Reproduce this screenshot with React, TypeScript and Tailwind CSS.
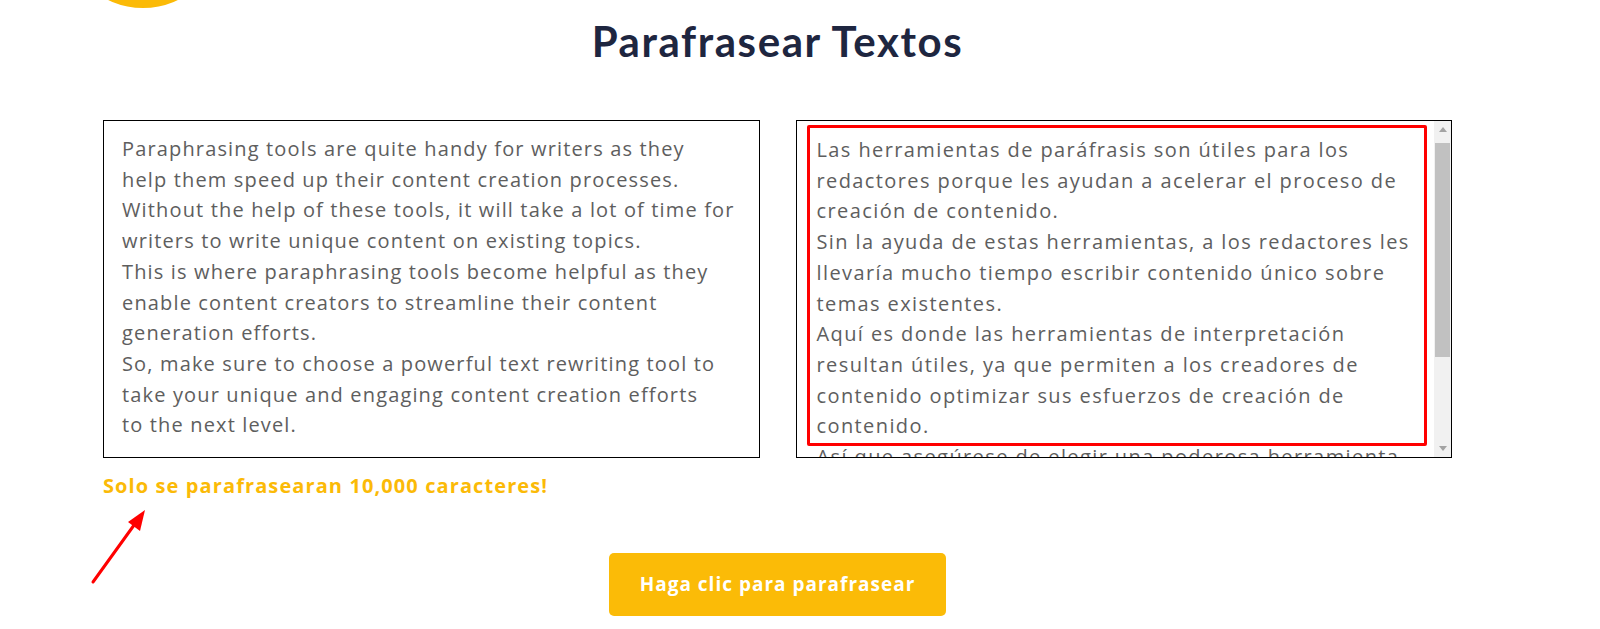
import React from "react";

const leftLines = [
  "Paraphrasing tools are quite handy for writers as they",
  "help them speed up their content creation processes.",
  "Without the help of these tools, it will take a lot of time for",
  "writers to write unique content on existing topics.",
  "This is where paraphrasing tools become helpful as they",
  "enable content creators to streamline their content",
  "generation efforts.",
  "So, make sure to choose a powerful text rewriting tool to",
  "take your unique and engaging content creation efforts",
  "to the next level.",
];

const rightLines = [
  "Las herramientas de paráfrasis son útiles para los",
  "redactores porque les ayudan a acelerar el proceso de",
  "creación de contenido.",
  "Sin la ayuda de estas herramientas, a los redactores les",
  "llevaría mucho tiempo escribir contenido único sobre",
  "temas existentes.",
  "Aquí es donde las herramientas de interpretación",
  "resultan útiles, ya que permiten a los creadores de",
  "contenido optimizar sus esfuerzos de creación de",
  "contenido.",
  "Así que asegúrese de elegir una poderosa herramienta",
];

const bodyFont = { fontFamily: '"Open Sans", "Noto Sans", sans-serif' };

export default function App() {
  return (
    <div className="relative w-full h-[629px] overflow-hidden bg-white">
      {/* yellow circle logo fragment */}
      <div className="absolute left-[63px] top-[-152px] w-[160px] h-[160px] rounded-full bg-[#fbba07]" />

      <div className="ml-[103px] w-[1349px] flex flex-col">
        <h1
          className="mt-[16px] h-[50px] text-center text-[42px] leading-[50px] font-bold text-[#1e2640] tracking-[1.6px]"
          style={{ fontFamily: 'Lato, "Open Sans", sans-serif' }}
        >
          Parafrasear Textos
        </h1>

        <div className="mt-[54px] grid grid-cols-2 gap-[36px]">
          <div
            className="h-[338px] border border-black pl-[18px] pt-[13px] text-[20px] leading-[30.7px] tracking-[1.15px] text-[#5e5e5e] overflow-hidden"
            style={bodyFont}
          >
            {leftLines.map((l, i) => (
              <div key={i} className="whitespace-nowrap">
                {l}
              </div>
            ))}
          </div>

          <div className="relative h-[338px] border border-black flex overflow-hidden">
            <div
              className="flex-1 pl-[20px] pt-[14px] text-[20px] leading-[30.7px] tracking-[1.4px] text-[#5e5e5e] overflow-hidden"
              style={bodyFont}
            >
              {rightLines.map((l, i) => (
                <div key={i} className="whitespace-nowrap">
                  {l}
                </div>
              ))}
            </div>
            {/* scrollbar */}
            <div className="w-[17px] bg-[#f1f1f1] flex flex-col items-center">
              <div className="h-[17px] w-full flex items-center justify-center">
                <svg width="8" height="5" viewBox="0 0 8 5">
                  <polygon points="4,0 8,5 0,5" fill="#a3a3a3" />
                </svg>
              </div>
              <div className="mt-[5px] h-[214px] w-[15px] bg-[#c1c1c1]" />
              <div className="flex-1" />
              <div className="h-[17px] w-full flex items-center justify-center">
                <svg width="8" height="5" viewBox="0 0 8 5">
                  <polygon points="0,0 8,0 4,5" fill="#a3a3a3" />
                </svg>
              </div>
            </div>
            {/* red annotation */}
            <div className="absolute left-[10px] top-[4px] w-[620px] h-[321px] border-[3px] border-[#ff0000] rounded-[2px]" />
          </div>
        </div>

        <p
          className="mt-[14px] text-[20px] leading-[28px] font-bold tracking-[1.1px] text-[#fbba07]"
          style={bodyFont}
        >
          Solo se parafrasearan 10,000 caracteres!
        </p>

        <div className="mt-[53px] flex justify-center">
          <button
            className="w-[337px] h-[63px] rounded-[5px] bg-[#fbbb07] text-white text-[19px] font-bold tracking-[1px]"
            style={bodyFont}
          >
            Haga clic para parafrasear
          </button>
        </div>
      </div>

      {/* red arrow annotation */}
      <svg
        className="absolute left-0 top-0"
        width="200"
        height="629"
        viewBox="0 0 200 629"
      >
        <line x1="93" y1="582" x2="137" y2="521" stroke="#ff0000" strokeWidth="3" strokeLinecap="round" />
        <polygon points="145,510 140,531 128,522" fill="#ff0000" />
      </svg>
    </div>
  );
}
